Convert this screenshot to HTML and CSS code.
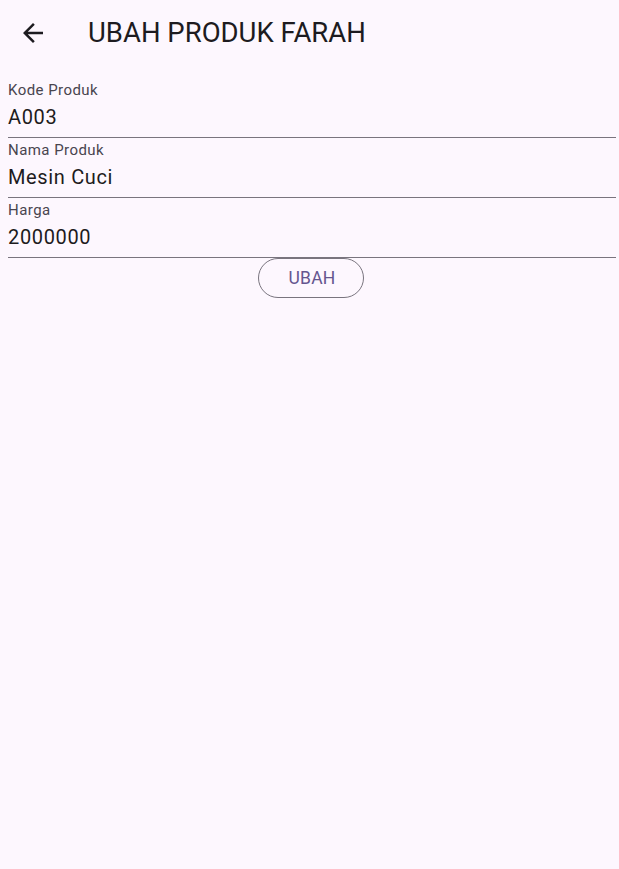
FILE: index.html
```html
<!DOCTYPE html>
<html>
<head>
<meta charset="utf-8">
<link rel="stylesheet" href="styles.css">
</head>
<body>
<header class="appbar">
  <button class="back" aria-label="Kembali">
    <svg width="30" height="30" viewBox="0 0 24 24"><path d="M20 11H7.83l5.59-5.59L12 4l-8 8 8 8 1.41-1.41L7.83 13H20v-2z" fill="#1d1b20"/></svg>
  </button>
  <h1 class="title">UBAH PRODUK FARAH</h1>
</header>
<main class="form">
  <div class="field">
    <label class="label">Kode Produk</label>
    <div class="value">A003</div>
  </div>
  <div class="field">
    <label class="label">Nama Produk</label>
    <div class="value">Mesin Cuci</div>
  </div>
  <div class="field">
    <label class="label">Harga</label>
    <div class="value">2000000</div>
  </div>
  <div class="actions">
    <button class="btn">UBAH</button>
  </div>
</main>
</body>
</html>
```
FILE: styles.css
```css
html, body {
  margin: 0;
  padding: 0;
  background: #fdf7fe;
  font-family: Roboto, "Noto Sans", sans-serif;
  color: #1d1b20;
}
.appbar {
  height: 66px;
  display: flex;
  align-items: center;
}
.back {
  width: 48px;
  height: 48px;
  margin-left: 9px;
  border: 0;
  background: none;
  padding: 0;
  display: flex;
  align-items: center;
  justify-content: center;
}
.title {
  margin: 0 0 0 31px;
  font-size: 27.5px;
  font-weight: 400;
  line-height: 32px;
}
.form {
  margin: 12px 3px 0 8px;
  display: flex;
  flex-direction: column;
}
.field {
  height: 59px;
  border-bottom: 1px solid #79747e;
  display: flex;
  flex-direction: column;
}
.label {
  font-size: 15px;
  line-height: 20px;
  margin-top: 2px;
  color: #49454f;
  letter-spacing: 0.45px;
}
.value {
  font-size: 20px;
  line-height: 24px;
  margin-top: 5px;
  letter-spacing: 0.65px;
}
.actions {
  display: flex;
  justify-content: center;
}
.btn {
  width: 106px;
  height: 40px;
  border: 1px solid #79747e;
  border-radius: 20px;
  background: none;
  color: #65558f;
  font-family: Roboto, sans-serif;
  font-size: 17.5px;
  font-weight: 400;
  letter-spacing: 0.15px;
  margin-left: -2px;
  padding: 0 0 0 2px;
}
```
